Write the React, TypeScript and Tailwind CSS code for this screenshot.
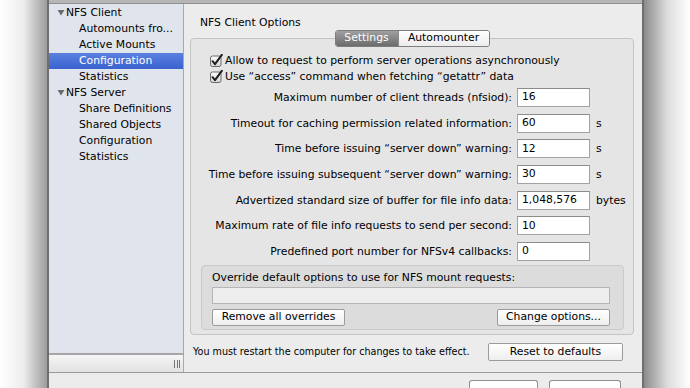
import React from "react";

const font = "font-['DejaVu_Sans','Liberation_Sans',sans-serif]";

const Tri = () => (
  <svg width="8" height="7" viewBox="0 0 8 7" className="mr-[1px]">
    <path d="M0.5 1 L7.5 1 L4 6.5 Z" fill="#6b6b6b" />
  </svg>
);

const CheckBox = () => (
  <svg width="14" height="13" viewBox="0 0 14 13">
    <defs>
      <linearGradient id="cb" x1="0" y1="0" x2="0" y2="1">
        <stop offset="0" stopColor="#ffffff" />
        <stop offset="1" stopColor="#d4d4d4" />
      </linearGradient>
    </defs>
    <rect x="0.5" y="2" width="10.5" height="10.5" rx="2" fill="url(#cb)" stroke="#6a6a6a" />
    <path d="M2.6 7.2 L5 10.2 L11.8 0.8" fill="none" stroke="#1e1e1e" strokeWidth="2" strokeLinecap="round" strokeLinejoin="round" />
  </svg>
);

const sidebar = [
  { label: "NFS Client", group: true },
  { label: "Automounts fro..." },
  { label: "Active Mounts" },
  { label: "Configuration", selected: true },
  { label: "Statistics" },
  { label: "NFS Server", group: true },
  { label: "Share Definitions" },
  { label: "Shared Objects" },
  { label: "Configuration" },
  { label: "Statistics" },
];

const fields = [
  { label: "Maximum number of client threads (nfsiod):", value: "16" },
  { label: "Timeout for caching permission related information:", value: "60", unit: "s" },
  { label: "Time before issuing \u201cserver down\u201d warning:", value: "12", unit: "s" },
  { label: "Time before issuing subsequent \u201cserver down\u201d warning:", value: "30", unit: "s" },
  { label: "Advertized standard size of buffer for file info data:", value: "1,048,576", unit: "bytes" },
  { label: "Maximum rate of file info requests to send per second:", value: "10" },
  { label: "Predefined port number for NFSv4 callbacks:", value: "0" },
];

const Btn = ({ children, className = "" }: { children: React.ReactNode; className?: string }) => (
  <div
    className={`flex items-center justify-center rounded-[2px] border border-[#9b9b9b] bg-gradient-to-b from-white to-[#eeeeee] text-[10.8px] text-black ${className}`}
  >
    {children}
  </div>
);

export default function App() {
  return (
    <div className={`flex h-[388px] w-[690px] overflow-hidden bg-white ${font}`}>
      {/* left shadow */}
      <div className="w-[47px] bg-gradient-to-r from-white via-[#ededed] to-[#9c9c9c]" />

      {/* window */}
      <div className="flex w-[597px] flex-col border-x-2 border-x-[#6e6e6e] bg-[#ececec]">
        <div className="h-[4px] border-b border-[#8f8f8f] bg-[#b6b6b6]" />
        <div className="flex h-[373px]">
          {/* sidebar */}
          <div className="flex w-[135px] flex-col border-r border-[#a9a9a9]">
            <div className="flex-1 bg-[#e0e4ed] pt-[1px]">
              {sidebar.map((it, i) => (
                <div
                  key={i}
                  className={`flex h-[16px] items-center text-[10.8px] leading-[16px] ${
                    it.selected
                      ? "bg-gradient-to-b from-[#5a80df] to-[#3a62cf] text-white"
                      : "text-black"
                  } ${it.group ? "pl-[8px]" : "pl-[30px]"}`}
                >
                  {it.group && <Tri />}
                  <span>{it.label}</span>
                </div>
              ))}
            </div>
            <div className="h-[2px] bg-[#a6a6a6]" />
            <div className="flex h-[17px] items-center justify-end bg-gradient-to-b from-[#f6f6f6] to-[#e2e2e2] pr-[3px]">
              <div className="flex gap-[1.5px]">
                <div className="h-[8px] w-[1px] bg-[#777]" />
                <div className="h-[8px] w-[1px] bg-[#777]" />
                <div className="h-[8px] w-[1px] bg-[#777]" />
              </div>
            </div>
          </div>

          {/* main */}
          <div className="flex flex-1 flex-col pt-[11px]">
            <div className="h-[15px] pl-[16px] text-[10.8px] leading-[16px] text-black">NFS Client Options</div>

            {/* tabs */}
            <div className="relative z-10 -mb-[9px] ml-[6px] mr-[8px] flex justify-center">
              <div className="flex h-[17px] overflow-hidden rounded-[3px] border border-[#7d7d7d] text-[10.8px]">
                <div className="flex w-[62px] items-center justify-center bg-gradient-to-b from-[#a0a0a0] to-[#6c6c6c] text-white">
                  Settings
                </div>
                <div className="flex w-[91px] items-center justify-center border-l border-[#8a8a8a] bg-gradient-to-b from-white to-[#ececec] text-black">
                  Automounter
                </div>
              </div>
            </div>

            {/* tab box */}
            <div className="ml-[6px] mr-[8px] flex h-[297px] flex-col rounded-[4px] border border-[#c4c4c4] bg-[#e5e5e5] pt-[14px]">
              {[
                "Allow to request to perform server operations asynchronously",
                "Use \u201caccess\u201d command when fetching \u201cgetattr\u201d data",
              ].map((t) => (
                <div key={t} className="flex h-[16px] items-center pl-[19px] text-[10.8px] text-black">
                  <CheckBox />
                  <span className="ml-[1px]">{t}</span>
                </div>
              ))}

              <div className="mt-[3px] flex flex-col">
                {fields.map((f, i) => (
                  <div
                    key={f.label}
                    className={`flex items-start text-[10.8px] text-black ${
                      i === fields.length - 1 ? "h-[23px]" : "h-[25.67px]"
                    }`}
                  >
                    <div className="w-[321px] text-right leading-[19px]">{f.label}</div>
                    <div className="ml-[5px] flex h-[19px] w-[73px] items-center border border-[#a3a3a3] border-t-[#8c8c8c] bg-white pl-[4px]">
                      {f.value}
                    </div>
                    {f.unit && <div className="ml-[6px] leading-[19px]">{f.unit}</div>}
                  </div>
                ))}
              </div>

              {/* override box */}
              <div className="ml-[10px] mr-[9px] flex h-[65px] flex-col rounded-[4px] border border-[#c9c9c9] bg-[#dcdcdc] pl-[10px] pr-[13px] pt-[4px]">
                <div className="h-[16px] text-[10.8px] leading-[16px] text-black">
                  Override default options to use for NFS mount requests:
                </div>
                <div className="mt-[1px] h-[17px] border border-[#b5b5b5] bg-[#eeeeee]" />
                <div className="mt-[5px] flex justify-between">
                  <Btn className="h-[17px] w-[133px]">Remove all overrides</Btn>
                  <Btn className="h-[17px] w-[113px]">Change options...</Btn>
                </div>
              </div>
            </div>

            {/* footer */}
            <div className="mt-[8px] flex items-center justify-between pl-[9px] pr-[19px]">
              <span className="text-[9.6px] text-black">You must restart the computer for changes to take effect.</span>
              <Btn className="h-[18px] w-[135px]">Reset to defaults</Btn>
            </div>
          </div>
        </div>

        <div className="h-[1px] bg-[#9a9a9a]" />
        <div className="flex flex-1 justify-end gap-[11px] pr-[21px] pt-[7px]">
          <div className="h-[8px] w-[69px] rounded-t-[3px] border border-b-0 border-[#8e8e8e] bg-white" />
          <div className="h-[8px] w-[72px] rounded-t-[3px] border border-b-0 border-[#8e8e8e] bg-white" />
        </div>
      </div>

      {/* right shadow */}
      <div className="flex-1 bg-gradient-to-r from-[#8c8c8c] via-[#dcdcdc] to-white" />
    </div>
  );
}
